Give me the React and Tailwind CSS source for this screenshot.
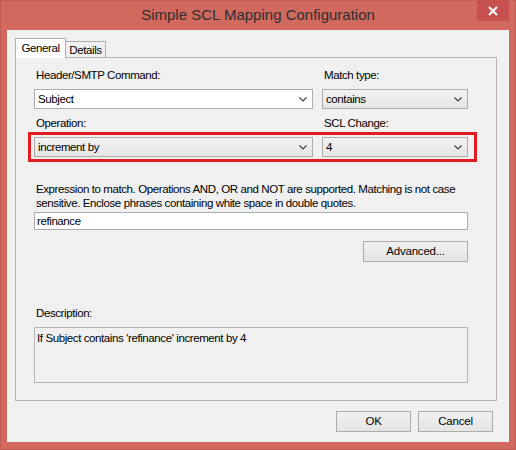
// ========================== IMPORTS ==========================
import React, { useState } from "react";

// ========================== SMALL PARTS ==========================
// Thin "v" arrow used by the drop-down boxes
const Chevron = () => (
  <svg width="8" height="5" viewBox="0 0 8 5" className="shrink-0">
    <polyline points="0.5,0.5 4,4 7.5,0.5" fill="none" stroke="#3c3c3c" strokeWidth="1.1" />
  </svg>
);

// Drop-down box: editable (white) or list style (gray gradient)
const Combo = ({ value, editable }) => (
  <div
    className={`h-[20px] flex items-center justify-between pl-[3px] pr-[5px] border ${
      editable
        ? "bg-white border-[#abadb3]"
        : "bg-gradient-to-b from-[#f2f2f2] to-[#e5e5e5] border-[#acacac]"
    }`}
  >
    <span>{value}</span>
    <Chevron />
  </div>
);

// Push button
const Button = ({ children, className = "" }) => (
  <button
    className={`h-[21px] border border-[#acacac] bg-gradient-to-b from-[#f0f0f0] to-[#e5e5e5] text-center tracking-[-0.2px] ${className}`}
  >
    {children}
  </button>
);

// ========================== COMPONENT ==========================
export default function App() {
  const [tab, setTab] = useState("general");
  const [expr, setExpr] = useState("refinance");

  return (
    <div className="w-[516px] h-[450px] flex flex-col bg-[#d2695f] shadow-[inset_0_0_0_1px_#c25b51] font-['Liberation_Sans',Arial,sans-serif] text-[11.5px] tracking-[-0.4px] text-black select-none">

      {/* ================= TITLE BAR ================= */}
      <div className="h-[30px] flex items-start shrink-0">
        <div className="flex-1 pl-[39px] text-center text-[15px] tracking-normal leading-[30px] text-[#2e2e2e]">
          Simple SCL Mapping Configuration
        </div>
        <div className="w-[32px] h-[21px] mr-[7px] bg-[#c75050] flex items-center justify-center">
          <svg width="10" height="10" viewBox="0 0 10 10">
            <path d="M1 1 L9 9 M9 1 L1 9" stroke="#fff" strokeWidth="2" />
          </svg>
        </div>
      </div>

      {/* ================= CLIENT AREA ================= */}
      <div className="mx-[7px] h-[412px] bg-[#f0f0f0] flex flex-col pt-[8px]">

        {/* -------- TABS -------- */}
        <div className="flex items-end pl-[8px]">
          <div
            onClick={() => setTab("general")}
            className="relative z-10 w-[51px] h-[20px] mb-[-1px] bg-white border border-b-0 border-[#adadad] leading-[18px] text-center"
          >
            General
          </div>
          <div
            onClick={() => setTab("details")}
            className="w-[40px] h-[16px] bg-[#f0f0f0] border border-l-0 border-b-0 border-[#adadad] leading-[16px] text-center"
          >
            Details
          </div>
        </div>

        {/* -------- PANEL -------- */}
        <div className="ml-[8px] w-[482px] h-[344px] border border-[#b4b4b4] bg-[#f0f0f0] pl-[18px] pt-[10px] leading-[15px]">
          <div className="w-[434px] flex flex-col">

            {/* Row 1 */}
            <div className="grid grid-cols-[279px_146px] gap-x-[9px]">
              <div className="pl-[2px]">Header/SMTP Command:</div>
              <div className="pl-[2px]">Match type:</div>
              <div className="mt-[6px]"><Combo value="Subject" editable /></div>
              <div className="mt-[6px]"><Combo value="contains" /></div>
            </div>

            {/* Row 2 labels */}
            <div className="grid grid-cols-[279px_146px] gap-x-[9px] mt-[7px]">
              <div className="pl-[2px]">Operation:</div>
              <div className="pl-[2px]">SCL Change:</div>
            </div>

            {/* Row 2 boxes, circled in red */}
            <div className="mt-[1px] -ml-[6px] w-[449px] border-[3px] border-[#e31b23] pl-[3px] pr-[6px] py-[2px]">
              <div className="grid grid-cols-[279px_146px] gap-x-[9px]">
                <Combo value="increment by" />
                <Combo value="4" />
              </div>
            </div>

            {/* Expression */}
            <div className="mt-[20px] pl-[2px] leading-[14px]">
              Expression to match. Operations AND, OR and NOT are supported. Matching is not case
              sensitive. Enclose phrases containing white space in double quotes.
            </div>
            <input
              value={expr}
              onChange={(e) => setExpr(e.target.value)}
              className="mt-[2px] h-[18px] w-full bg-white border border-[#abadb3] px-[2px] outline-none"
            />

            <div className="flex justify-end mt-[11px]">
              <Button className="w-[105px]">Advanced...</Button>
            </div>

            {/* Description */}
            <div className="mt-[44px] pl-[2px]">Description:</div>
            <div className="mt-[6px] h-[56px] border border-[#b4b4b4] bg-[#f0f0f0] px-[2px] pt-[3px]">
              If Subject contains 'refinance' increment by 4
            </div>
          </div>
        </div>

        {/* -------- DIALOG BUTTONS -------- */}
        <div className="flex justify-end gap-[7px] mt-[10px] pr-[16px]">
          <Button className="w-[75px]">OK</Button>
          <Button className="w-[75px]">Cancel</Button>
        </div>
      </div>
    </div>
  );
}
